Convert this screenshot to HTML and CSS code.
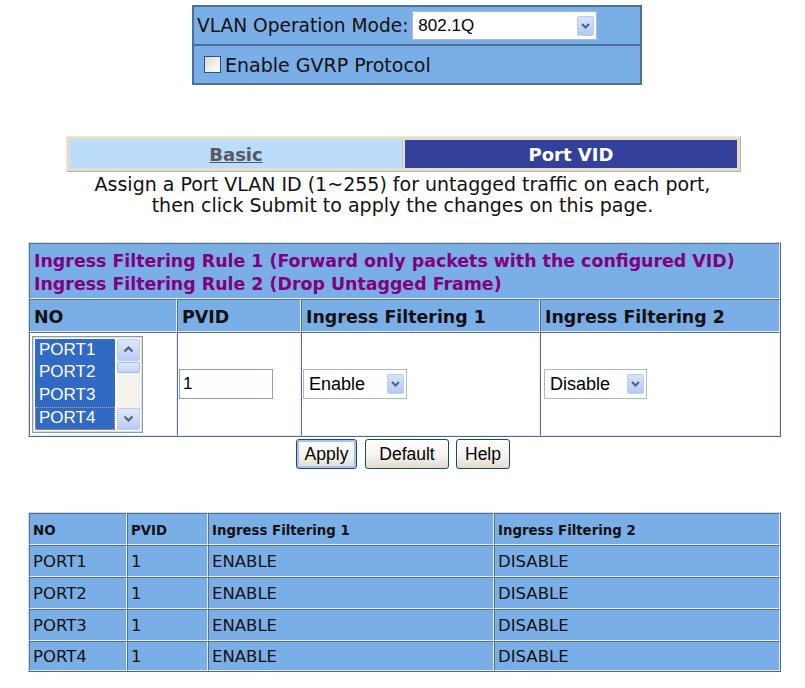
FILE: index.html
```html
<!DOCTYPE html>
<html>
<head>
<meta charset="utf-8">
<link rel="stylesheet" href="styles.css">
</head>
<body>
<div class="page">
  <table class="mode">
    <tr>
      <td class="mode-cell">
        <span class="mode-label">VLAN Operation Mode:</span>
        <div class="sel sel-mode"><span class="sel-text">802.1Q</span><span class="drop"><svg width="17" height="19" viewBox="0 0 17 19"><path d="M5 8 L8.5 11.5 L12 8" fill="none" stroke="#4d6185" stroke-width="2"/></svg></span></div>
      </td>
    </tr>
    <tr>
      <td class="mode-cell"><span class="cb"></span><span class="mode-label gvrp">Enable GVRP Protocol</span></td>
    </tr>
  </table>

  <div class="tabs">
    <div class="tab tab-basic"><a class="tab-link">Basic</a></div>
    <div class="tab tab-active">Port VID</div>
  </div>

  <p class="note">Assign a Port VLAN ID (1~255) for untagged traffic on each port,<br>then click Submit to apply the changes on this page.</p>

  <table class="grid main">
    <colgroup>
      <col class="c1"><col class="c2"><col class="c3"><col class="c4">
    </colgroup>
    <tr>
      <td colspan="4" class="rules">Ingress Filtering Rule 1 (Forward only packets with the configured VID)<br>Ingress Filtering Rule 2 (Drop Untagged Frame)</td>
    </tr>
    <tr class="head">
      <td>NO</td><td>PVID</td><td>Ingress Filtering 1</td><td>Ingress Filtering 2</td>
    </tr>
    <tr class="edit">
      <td class="cell-list">
        <div class="listbox">
          <div class="items">
            <div class="item">PORT1</div>
            <div class="item">PORT2</div>
            <div class="item">PORT3</div>
            <div class="item focus">PORT4</div>
          </div>
          <div class="vscroll">
            <span class="sbtn"><svg width="17" height="17" viewBox="0 0 17 17"><path d="M4.5 10.5 L8.5 6.5 L12.5 10.5" fill="none" stroke="#4d6185" stroke-width="2.2"/></svg></span>
            <span class="thumb"></span>
            <span class="track"></span>
            <span class="sbtn"><svg width="17" height="17" viewBox="0 0 17 17"><path d="M4.5 6.5 L8.5 10.5 L12.5 6.5" fill="none" stroke="#4d6185" stroke-width="2.2"/></svg></span>
          </div>
        </div>
      </td>
      <td><div class="inp">1</div></td>
      <td><div class="sel sel-small sel-en"><span class="sel-text">Enable</span><span class="drop"><svg width="17" height="19" viewBox="0 0 17 19"><path d="M5 8 L8.5 11.5 L12 8" fill="none" stroke="#4d6185" stroke-width="2"/></svg></span></div></td>
      <td><div class="sel sel-small sel-dis"><span class="sel-text">Disable</span><span class="drop"><svg width="17" height="19" viewBox="0 0 17 19"><path d="M5 8 L8.5 11.5 L12 8" fill="none" stroke="#4d6185" stroke-width="2"/></svg></span></div></td>
    </tr>
  </table>

  <div class="buttons">
    <button class="btn btn-default btn-apply">Apply</button>
    <button class="btn btn-def">Default</button>
    <button class="btn btn-help">Help</button>
  </div>

  <table class="grid list">
    <colgroup>
      <col class="d1"><col class="d2"><col class="d3"><col class="d4">
    </colgroup>
    <tr class="lhead"><td>NO</td><td>PVID</td><td>Ingress Filtering 1</td><td>Ingress Filtering 2</td></tr>
    <tr><td>PORT1</td><td>1</td><td>ENABLE</td><td>DISABLE</td></tr>
    <tr><td>PORT2</td><td>1</td><td>ENABLE</td><td>DISABLE</td></tr>
    <tr><td>PORT3</td><td>1</td><td>ENABLE</td><td>DISABLE</td></tr>
    <tr><td>PORT4</td><td>1</td><td>ENABLE</td><td>DISABLE</td></tr>
  </table>
</div>
</body>
</html>
```
FILE: styles.css
```css
html, body {
  margin: 0;
  padding: 0;
  background: #ffffff;
}
.page {
  width: 805px;
  height: 688px;
  overflow: hidden;
  font-family: "DejaVu Sans", Verdana, sans-serif;
  color: #000;
}

/* top mode table */
.mode {
  margin: 5px 0 0 192px;
  width: 450px;
  border-collapse: collapse;
  background: #7aaee6;
  border: 2px solid #4f6e98;
}
.mode-cell {
  height: 37px;
  padding: 0 0 0 3px;
  border-bottom: 2px solid #4f6e98;
  font-size: 18.6px;
  white-space: nowrap;
}
.mode tr:last-child .mode-cell { border-bottom: none; }
.mode-cell > * { vertical-align: middle; }
.mode-label { display: inline-block; color: #111; }
.gvrp { font-size: 19px; }

.sel {
  display: inline-flex;
  align-items: center;
  justify-content: space-between;
  box-sizing: border-box;
  background: #fff;
  border: 1px solid #a5b9dc;
  font-family: "Liberation Sans", Arial, sans-serif;
  font-size: 17px;
  padding: 0 2px 0 5px;
}
.sel-mode {
  width: 185px;
  height: 29px;
  margin-left: -2px;
}
.sel-small {
  height: 30px;
  font-size: 18px;
}
.sel-en { width: 104px; }
.sel-dis { width: 103px; }
.drop {
  display: inline-block;
  width: 17px;
  height: 20px;
  border-radius: 2px;
  background: linear-gradient(#d7e2fb, #b6c9f4);
  border: 1px solid #bccdf4;
  box-sizing: border-box;
}
.drop svg { display: block; margin: -1px 0 0 -1px; }

.cb {
  display: inline-block;
  width: 17px;
  height: 17px;
  box-sizing: border-box;
  border: 1px solid #2c5585;
  background: linear-gradient(135deg, #d9d9d2, #ffffff);
  margin: 0 4px 0 7px;
}

/* tabs */
.tabs {
  display: flex;
  margin: 51px 0 0 66px;
  width: 675px;
  height: 36px;
  box-sizing: border-box;
  padding: 3px;
  gap: 2px;
  background: #e2decf;
  border-top: 1px solid #eeeadc;
  border-left: 1px solid #eeeadc;
  border-right: 1px solid #b8b4a4;
  border-bottom: 1px solid #b8b4a4;
}
.tab {
  flex: 1;
  display: flex;
  align-items: center;
  justify-content: center;
  font-family: "DejaVu Sans", sans-serif;
  font-weight: bold;
  font-size: 18px;
}
.tab-basic {
  background: #bcdcfc;
  border-right: 1px solid #c8c4b4;
}
.tab-link {
  color: #555a62;
  text-decoration: underline;
}
.tab-active {
  background: #33409c;
  color: #ffffff;
}

.note {
  margin: 2px 0 0 0;
  text-align: center;
  font-family: "DejaVu Sans", sans-serif;
  font-size: 19px;
  line-height: 21px;
  color: #111;
}

/* grids */
.grid {
  border-collapse: separate;
  border-spacing: 0;
  margin-left: 28px;
  width: 751px;
  table-layout: fixed;
  border: 1px solid;
  border-color: #cfdcea #4b6a93 #4b6a93 #cfdcea;
}
.grid td {
  border: 1px solid;
  border-color: #5b6f88 #e4eef9 #e4eef9 #5b6f88;
  padding: 0 0 0 4px;
  background: #7aaee6;
  white-space: nowrap;
}
.main { margin-top: 26px; }
.c1 { width: 148px; }
.c2 { width: 124px; }
.c3 { width: 239px; }
.c4 { width: 240px; }

.rules {
  height: 51px;
  padding-top: 3px !important;
  color: #800080;
  font-weight: bold;
  font-size: 17.4px;
  line-height: 23px;
}
.head td {
  height: 29px;
  padding-top: 2px;
  font-weight: bold;
  font-size: 17.4px;
  color: #111;
}
.edit td {
  height: 102px;
  background: #ffffff;
  padding: 0;
}
.edit td:nth-child(2), .edit td:nth-child(3), .edit td:nth-child(4) {
  padding-left: 1px;
}
.edit td:nth-child(4) { padding-left: 3px; }

.listbox {
  display: flex;
  width: 111px;
  height: 97px;
  margin-left: 2px;
  box-sizing: border-box;
  border: 1px solid #8d9aa8;
  outline: 1px solid #d9dee6;
  outline-offset: -2px;
  padding: 2px;
  background: #fff;
}
.items {
  width: 80px;
  display: flex;
  flex-direction: column;
}
.item {
  flex: 1;
  background: #316ac5;
  color: #fff;
  font-family: "Liberation Sans", Arial, sans-serif;
  font-size: 17px;
  line-height: 22px;
  padding-left: 4px;
  box-sizing: border-box;
}
.item.focus {
  outline: 1px dotted #e0a040;
  outline-offset: -1px;
}
.vscroll {
  flex: 1;
  display: flex;
  flex-direction: column;
  background: #f4f2ea;
  margin-left: 2px;
}
.sbtn {
  display: block;
  height: 20px;
  border: 1px solid #bccdf4;
  border-radius: 2px;
  background: linear-gradient(#dfe8fc, #b8cbf5);
}
.sbtn svg { display: block; margin: 1px auto 0; }
.thumb {
  display: block;
  height: 9px;
  margin-top: 1px;
  border: 1px solid #a9bde9;
  border-radius: 2px;
  background: linear-gradient(#e0e8fc, #c1d2f8);
}
.track { flex: 1; }

.inp {
  width: 94px;
  height: 30px;
  box-sizing: border-box;
  border: 1px solid #8aa0c2;
  background: #fff;
  font-family: "Liberation Sans", Arial, sans-serif;
  font-size: 17px;
  line-height: 28px;
  padding-left: 3px;
}

/* buttons */
.buttons {
  display: flex;
  justify-content: center;
  gap: 7px;
  margin: 2px 0 0 0;
  padding-left: 1px;
  height: 30px;
}
.btn {
  height: 30px;
  box-sizing: border-box;
  padding: 0;
  font-family: "Liberation Sans", Arial, sans-serif;
  font-size: 17.5px;
  color: #000;
  border: 1px solid #20456e;
  border-radius: 3px;
  background: linear-gradient(#ffffff, #f3f2ec 60%, #dedbcf);
}
.btn-apply { width: 61px; }
.btn-def { width: 84px; margin-left: 1px; }
.btn-help { width: 54px; }
.btn-default {
  box-shadow: inset 0 0 0 2px #a9c2ef;
}

/* list table */
.list { margin-top: 43px; }
.d1 { width: 98px; }
.d2 { width: 81px; }
.d3 { width: 286px; }
.d4 { width: 286px; }
.list td {
  height: 30px;
  font-size: 16.5px;
  color: #111;
  padding-left: 3px;
}
.list tr:last-child td { height: 28px; }
.list .lhead td {
  font-family: "DejaVu Sans Condensed", "DejaVu Sans", sans-serif;
  font-weight: bold;
  font-size: 14.8px;
}
```
